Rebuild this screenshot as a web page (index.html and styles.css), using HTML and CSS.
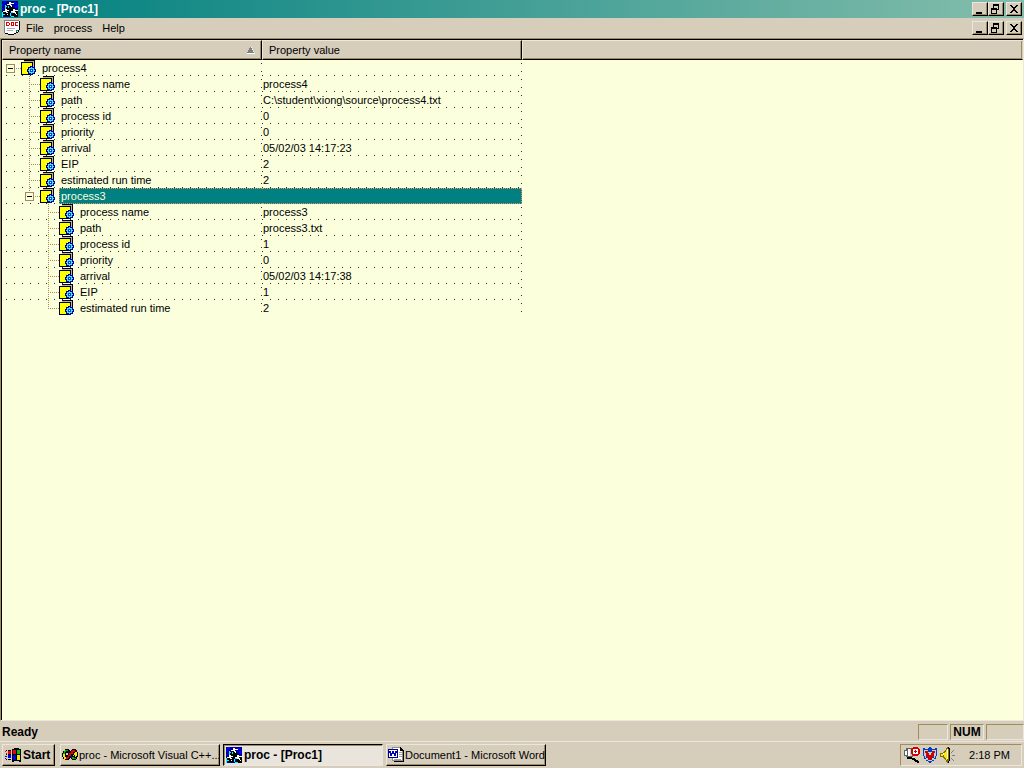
FILE: index.html
```html
<!DOCTYPE html>
<html lang="en">
<head>
<meta charset="utf-8">
<title>proc - [Proc1]</title>
<link rel="stylesheet" href="styles.css">
</head>
<body>
<svg class="defs" aria-hidden="true">
  <symbol id="mfc" viewBox="0 0 16 16">
    <path fill="#000090" d="M0 0h16v16H0z"/>
    <path fill="#0000ff" d="M1 0h3v2H1zM0 3h2v2H0zM11 1h4v2h-4zM13 4h3v3h-3zM0 7h2v1H0zM2 2h1v1H2z"/>
    <path fill="#000" d="M6 3h3v2h2v2h2v3h3v6h-6v-4H8v3H2v-2H0v-3h3V7h2V5h1z"/>
    <path fill="#fff" d="M7 1h2v1h3v1H9v1h1v2H9V5H8V4H5V3h2zM3 8h2v1h2v1H5v1h1v1H4v-1H1v-1h2zM11 8h2v1h3v1h-3v1h1v2h-1v-1h-2v-1H9v-1h2zM5 13h1v1H5zM14 13h1v1h-1z"/>
    <path fill="#00ffff" d="M3 4h1v4H3zM4 5h1v1H4zM6 5h1v2H6zM0 11h1v5H0zM1 13h2v1H1zM8 12h1v3H8zM9 11h2v1H9zM9 15h3v1H9z"/>
  </symbol>
  <symbol id="doc" viewBox="0 0 16 16">
    <path fill="#808080" d="M0 0h15v1H1v12H0z"/>
    <path fill="#fff" d="M1 1h14v9h-1v2h-2v1h-2v1H4v-1H1z"/>
    <path fill="#000" d="M15 1h1v9h-1zM14 10h1v2h-1zM12 12h2v1h-2zM1 13h3v1H1zM4 14h6v1H4zM10 13h2v1h-2z"/>
    <path fill="#e00000" fill-rule="evenodd" d="M2 2h3v1h1v2H5v1H2zm1 1v2h2V3zM7 2h3v4H7zm1 1v2h1V3zM11 2h3v1h-2v2h2v1h-3z"/>
    <path fill="#b0b0b0" d="M3 8h8v1H3zM3 10h6v1H3z"/>
    <path fill="#008080" d="M12 10h2v1h-1v1h-1z"/>
  </symbol>
  <symbol id="node" viewBox="0 0 16 16">
    <path fill="#000" d="M3 0h11v11H3z"/>
    <path fill="#b4b4b4" d="M3 1h9v1H3zM12 1h1v8h-1z"/>
    <path fill="#000" d="M0 2h12v13H0z"/>
    <path fill="#ff0" d="M1 3h10v11H1z"/>
    <path fill="#0000a0" d="M9 6h3v1h2v2h1v3h-1v2h-2v1H9v-1H7v-2H6V9h1V7h2z"/>
    <path fill="#40e8ff" d="M10 7h1v1h2v2h1v1h-1v2h-2v1h-1v-1H8v-2H7v-1h1V8h2z"/>
    <path fill="#0040d0" d="M9 9h3v3H9z"/>
    <path fill="#fff" d="M10 10h1v1h-1z"/>
  </symbol>
  <symbol id="win" viewBox="0 0 16 14">
    <path fill="#000" d="M7 1h2V0h5v1h2v13h-2v-1H9v1H7zM1 2h1v1H1zM3 2h3v1H3zM1 6h1v1H1zM3 6h3v1H3zM1 11h1v1H1zM3 11h3v1H3z"/>
    <path fill="#f00000" d="M8 2h3v4H8zM3 3h3v3H3zM0 3h1v1H0zM1 5h1v1H1z"/>
    <path fill="#00c000" d="M12 2h3v4h-3z"/>
    <path fill="#0000f0" d="M8 7h3v5H8zM3 7h3v3H3zM0 8h2v1H0zM0 10h1v1H0z"/>
    <path fill="#f0e800" d="M12 7h3v5h-3z"/>
  </symbol>
  <symbol id="vc" viewBox="0 0 16 12">
    <path fill="#000" d="M3 0h4v1h1v1h1V1h1V0h4v1h1v2h1v5h-1v2h-1v1h-4v-1H9V9H8v1H7v1H3v-1H1V8H0V4h1V2h2z"/>
    <path fill="#e00000" d="M9 2h1V1h3v2h-2v2H9v2H7v2H6v1H4V8h2V6h1V4h2z"/>
    <path fill="#00b000" d="M3 1h3v1H4v1H3v2H1V4h1V2h1zM10 8h2v1h2v1h-4z"/>
    <path fill="#ffe800" d="M1 5h2v3h1v2H2V8H1zM13 3h2v4h-1v1h-1V6h-1V4h1z"/>
    <path fill="#0000d0" d="M6 2h1v2H6zM9 7h1v2H9z"/>
    <path fill="#d6cdbb" d="M4 4h2v2H4zM11 6h1v1h-1z"/>
  </symbol>
  <symbol id="word" viewBox="0 0 16 16">
    <path fill="#909090" d="M4 0h8v1h2v2h1v11H4z"/>
    <path fill="#fff" d="M5 1h7v3h2v9H5z"/>
    <path fill="#000" d="M12 0h1v1h1v1h1v1h1v12H6v-1h9V4h-3z"/>
    <path fill="#a0a0a0" d="M11 5h3v1h-3zM11 7h3v1h-3zM11 9h3v1h-3zM6 12h7v1H6z"/>
    <path fill="#000090" d="M0 2h10v9H0z"/>
    <path fill="#fff" d="M1 3h8v7H1z"/>
    <path fill="#0000b0" d="M1 4h2v2h1V4h2v2h1V4h2v2H8v3H6V7H5 4v2H2V6H1z"/>
  </symbol>
  <symbol id="scan" viewBox="0 0 16 16">
    <path fill="#606060" d="M2 1h6v1h1v8H2V9H0V3h2z"/>
    <path fill="#fff" d="M1 4h2v4H1zM4 2h2v7H4z"/>
    <path fill="#c8c8c8" d="M6 2h2v7H6z"/>
    <path fill="#000" d="M3 10h5v1h3v1h1v1h2v1h1v2h-2v-1h-2v-1h-1v-1H8v-1H3z"/>
    <path fill="#d00000" d="M9 0h5v1h1v1h1v5h-1v1h-1v1H9V8H8V7H7V2h1V1h1z"/>
    <path fill="#fff" d="M9 2h5v5H9z"/>
    <path fill="#d00000" d="M11 3h1v1h1v1h-1v1h-1V5h-1V4h1z"/>
  </symbol>
  <symbol id="shield" viewBox="0 0 14 16">
    <path fill="#0040c0" d="M0 1h2v1h3V1h1V0h2v1h1v1h3V1h2v8h-1v3h-2v2H9v1H8v1H6v-1H5v-1H3v-2H1V9H0z"/>
    <path fill="#c0d0d8" d="M1 3h12v6h-1v2h-1v2H9v1H5v-1H3v-2H2V9H1z"/>
    <path fill="#0040c0" d="M5 3h4v2H5zM3 9h1v2H3zM10 9h1v2h-1z"/>
    <path fill="#d00000" d="M2 4h3v2h1v2h2V6h1V4h3v2h-1v3h-1v2H9v2H5v-2H4V9H3V6H2z"/>
  </symbol>
  <symbol id="speaker" viewBox="0 0 16 16">
    <path fill="#807000" d="M0 6h3V5h1V4h1V3h1V1h1V0h2v16H7v-1H6v-2H5v-1H4v-1H3v-1H0z"/>
    <path fill="#ffe800" d="M1 7h2v2H1zM4 6h1V5h1V3h1v10H6v-2H5v-1H4z"/>
    <path fill="#fff" d="M3 6h1v2H3zM7 2h1v10H7z"/>
    <path fill="#000" d="M8 0h1v1h1v13H9v2H8v-2h1V2H8z"/>
    <path fill="#808080" d="M11 5h1V4h1V3h1v1h-1v1h-1v1h-1zM12 8h3v1h-3zM11 11h1v1h1v1h1v1h-1v-1h-1v-1h-1z"/>
  </symbol>
  <symbol id="min" viewBox="0 0 12 10"><path d="M2 8h6v2H2z"/></symbol>
  <symbol id="restore" viewBox="0 0 12 10"><path d="M3 0h6v6H7V5h1V2H4v2H3zM1 4h6v6H1zm1 2v3h4V6z" fill-rule="evenodd"/></symbol>
  <symbol id="close" viewBox="0 0 12 10"><path d="M2 1h2v1h1v1h2V2h1V1h2v1H9v1H8v1H7v2h1v1h1v1h1v1H8V8H7V7H5v1H4v1H2V8h1V7h1V6h1V4H4V3H3V2H2z"/></symbol>
</svg>

<header class="titlebar">
  <svg class="icon"><use href="#mfc"/></svg>
  <h1 class="title">proc - [Proc1]</h1>
  <div class="controls">
    <button class="control" aria-label="Minimize"><svg class="glyph"><use href="#min"/></svg></button>
    <button class="control" aria-label="Restore"><svg class="glyph"><use href="#restore"/></svg></button>
    <button class="control control-close" aria-label="Close"><svg class="glyph"><use href="#close"/></svg></button>
  </div>
</header>

<nav class="menubar">
  <svg class="icon"><use href="#doc"/></svg>
  <button class="menu">File</button>
  <button class="menu">process</button>
  <button class="menu">Help</button>
  <div class="controls">
    <button class="control" aria-label="Minimize document"><svg class="glyph"><use href="#min"/></svg></button>
    <button class="control" aria-label="Restore document"><svg class="glyph"><use href="#restore"/></svg></button>
    <button class="control control-close" aria-label="Close document"><svg class="glyph"><use href="#close"/></svg></button>
  </div>
</nav>

<main class="view">
  <table class="tree">
    <colgroup><col class="col"><col class="col"><col></colgroup>
    <thead>
      <tr>
        <th><div class="head">Property name<svg class="sort" viewBox="0 0 8 7"><path fill="#fff" d="M4 0h1v2h1v2h1v2h1v1H0V6h6z"/><path fill="#808080" d="M3 0h1v1h1v2h1v2h1v1H0V5h1V3h1V1h1z"/></svg></div></th>
        <th><div class="head">Property value</div></th>
        <th><div class="head"></div></th>
      </tr>
    </thead>
    <tbody>
      <tr><td><div class="node"><span class="branch root"><button class="toggle" aria-label="Collapse process4"></button></span><svg class="icon"><use href="#node"/></svg><span class="label">process4</span></div></td><td></td><td></td></tr>
      <tr><td><div class="node"><span class="indent"></span><span class="branch"></span><svg class="icon"><use href="#node"/></svg><span class="label">process name</span></div></td><td>process4</td><td></td></tr>
      <tr><td><div class="node"><span class="indent"></span><span class="branch"></span><svg class="icon"><use href="#node"/></svg><span class="label">path</span></div></td><td>C:\student\xiong\source\process4.txt</td><td></td></tr>
      <tr><td><div class="node"><span class="indent"></span><span class="branch"></span><svg class="icon"><use href="#node"/></svg><span class="label">process id</span></div></td><td>0</td><td></td></tr>
      <tr><td><div class="node"><span class="indent"></span><span class="branch"></span><svg class="icon"><use href="#node"/></svg><span class="label">priority</span></div></td><td>0</td><td></td></tr>
      <tr><td><div class="node"><span class="indent"></span><span class="branch"></span><svg class="icon"><use href="#node"/></svg><span class="label">arrival</span></div></td><td>05/02/03 14:17:23</td><td></td></tr>
      <tr><td><div class="node"><span class="indent"></span><span class="branch"></span><svg class="icon"><use href="#node"/></svg><span class="label">EIP</span></div></td><td>2</td><td></td></tr>
      <tr><td><div class="node"><span class="indent"></span><span class="branch"></span><svg class="icon"><use href="#node"/></svg><span class="label">estimated run time</span></div></td><td>2</td><td></td></tr>
      <tr class="selected"><td><div class="node"><span class="indent"></span><span class="branch last"><button class="toggle" aria-label="Collapse process3"></button></span><svg class="icon"><use href="#node"/></svg><span class="label">process3</span></div></td><td></td><td></td></tr>
      <tr><td><div class="node"><span class="indent"></span><span class="indent"></span><span class="branch"></span><svg class="icon"><use href="#node"/></svg><span class="label">process name</span></div></td><td>process3</td><td></td></tr>
      <tr><td><div class="node"><span class="indent"></span><span class="indent"></span><span class="branch"></span><svg class="icon"><use href="#node"/></svg><span class="label">path</span></div></td><td>process3.txt</td><td></td></tr>
      <tr><td><div class="node"><span class="indent"></span><span class="indent"></span><span class="branch"></span><svg class="icon"><use href="#node"/></svg><span class="label">process id</span></div></td><td>1</td><td></td></tr>
      <tr><td><div class="node"><span class="indent"></span><span class="indent"></span><span class="branch"></span><svg class="icon"><use href="#node"/></svg><span class="label">priority</span></div></td><td>0</td><td></td></tr>
      <tr><td><div class="node"><span class="indent"></span><span class="indent"></span><span class="branch"></span><svg class="icon"><use href="#node"/></svg><span class="label">arrival</span></div></td><td>05/02/03 14:17:38</td><td></td></tr>
      <tr><td><div class="node"><span class="indent"></span><span class="indent"></span><span class="branch"></span><svg class="icon"><use href="#node"/></svg><span class="label">EIP</span></div></td><td>1</td><td></td></tr>
      <tr><td><div class="node"><span class="indent"></span><span class="indent"></span><span class="branch last"></span><svg class="icon"><use href="#node"/></svg><span class="label">estimated run time</span></div></td><td>2</td><td></td></tr>
    </tbody>
  </table>
</main>

<div class="statusbar">
  <span class="status">Ready</span>
  <span class="pane"></span>
  <span class="pane pane-num">NUM</span>
  <span class="pane pane-last"></span>
</div>

<footer class="taskbar">
  <button class="task start"><svg class="icon"><use href="#win"/></svg>Start</button>
  <button class="task"><svg class="icon"><use href="#vc"/></svg>proc - Microsoft Visual C++...</button>
  <button class="task active"><svg class="icon"><use href="#mfc"/></svg>proc - [Proc1]</button>
  <button class="task"><svg class="icon"><use href="#word"/></svg>Document1 - Microsoft Word</button>
  <div class="tray">
    <svg class="icon"><use href="#scan"/></svg>
    <svg class="icon"><use href="#shield"/></svg>
    <svg class="icon"><use href="#speaker"/></svg>
    <time class="clock">2:18 PM</time>
  </div>
</footer>
</body>
</html>
```
FILE: styles.css
```css
:root {
  --face: #d6cdbb;
  --light: #ebe6de;
  --shadow: #a08c5c;
  --paper: #fbffdc;
  --teal: #008080;
  --grid: #203040;
  --guide: #a08c5c;
  --strong: bold 12px/16px "Liberation Sans", Arial, sans-serif;
}

* { box-sizing: border-box; }

body {
  margin: 0;
  height: 100vh;
  display: flex;
  flex-direction: column;
  overflow: hidden;
  background: var(--face);
  color: #000;
  font: 11px/16px "Liberation Sans", Arial, sans-serif;
}

button {
  margin: 0;
  padding: 0;
  border: 0;
  background: none;
  color: inherit;
  font: inherit;
}

.defs { position: absolute; width: 0; height: 0; }

svg { shape-rendering: crispEdges; }

.icon { flex: none; width: 16px; height: 16px; }

.titlebar {
  display: flex;
  align-items: center;
  gap: 2px;
  height: 18px;
  padding: 0 2px;
  background: linear-gradient(90deg, #008080, #84bdab);
  color: #fff;
}

.title { margin: 0; font: var(--strong); }

.controls { display: flex; margin-left: auto; }

.control {
  display: flex;
  width: 16px;
  height: 14px;
  padding: 1px;
  border: 1px solid;
  border-color: var(--light) #000 #000 var(--light);
  background: var(--face);
  box-shadow: inset -1px -1px var(--shadow);
}

.control-close { margin-left: 2px; }

.glyph { width: 12px; height: 10px; }

.menubar {
  display: flex;
  align-items: center;
  height: 20px;
  padding: 0 2px;
}

.menu { padding: 0 5px; }

.menubar .icon { margin: 0 1px 0 2px; }

.view {
  flex: 1;
  min-height: 0;
  border-style: solid;
  border-width: 1px;
  border-color: var(--shadow) var(--light) var(--light) var(--shadow);
  background: var(--paper);
  box-shadow: inset 1px 1px #000;
  padding: 1px 0 0 1px;
}

.tree {
  width: 100%;
  table-layout: fixed;
  border-collapse: separate;
  border-spacing: 0;
}

.col { width: 260px; }

.tree th, .tree td { padding: 0; text-align: left; font-weight: normal; }

.head {
  display: flex;
  align-items: center;
  justify-content: space-between;
  height: 20px;
  padding: 0 6px;
  border: 1px solid;
  border-color: var(--light) #000 #000 var(--light);
  background: var(--face);
  box-shadow: inset -1px -1px var(--shadow);
}

.tree th:last-child .head { border-right-color: var(--face); }

.sort { width: 8px; height: 7px; }

.tree td { height: 16px; line-height: 16px; white-space: nowrap; }

.tree td:not(:last-child) {
  background:
    linear-gradient(var(--grid) 1px, transparent 1px) 100% 3px / 1px 8px repeat-y,
    linear-gradient(90deg, var(--grid) 1px, transparent 1px) 4px 100% / 8px 1px repeat-x;
}

.tree td:nth-child(2) { background-position: 100% 3px, 0 100%; }

.tree tbody tr:last-child td:not(:last-child) {
  background: linear-gradient(var(--grid) 1px, transparent 1px) 100% 3px / 1px 8px repeat-y;
}

.node { display: flex; height: 16px; }

.indent, .branch { flex: none; width: 19px; }

.branch {
  padding: 4px;
  background:
    repeating-linear-gradient(var(--guide) 0 1px, transparent 1px 2px) 8px 0 / 1px 16px no-repeat,
    repeating-linear-gradient(90deg, var(--guide) 0 1px, transparent 1px 2px) 8px 8px / 11px 1px no-repeat;
}

.branch.last { background-size: 1px 8px, 11px 1px; }
.branch.root { background-size: 1px 0, 11px 1px; }

.toggle {
  display: block;
  width: 9px;
  height: 9px;
  border: 1px solid var(--guide);
  background: linear-gradient(#000, #000) 1px 3px / 5px 1px no-repeat var(--paper);
}

.label { flex: 1; padding-left: 5px; }

.selected .label, .selected td:nth-child(2) { background: var(--teal); color: var(--paper); }

.selected .label {
  margin-left: 3px;
  padding-left: 1px;
  border: 1px dotted #f09060;
  border-right: 0;
  line-height: 14px;
}

.tree .selected td:nth-child(2) {
  background: var(--teal);
  border: 1px dotted #f09060;
  border-left: 0;
}

.tree td:nth-child(2) { padding-left: 1px; }

.statusbar {
  display: flex;
  align-items: center;
  gap: 2px;
  height: 20px;
  padding: 2px 0 0 2px;
  font: var(--strong);
}

.status { flex: 1; }

.pane {
  width: 30px;
  height: 16px;
  border: 1px solid;
  border-color: var(--shadow) var(--light) var(--light) var(--shadow);
  line-height: 14px;
}

.pane-num { width: 34px; text-align: center; }
.pane-last { width: 38px; }

.taskbar {
  display: flex;
  gap: 3px;
  height: 27px;
  padding: 2px;
  border-top: 1px solid var(--light);
}

.task {
  display: flex;
  align-items: center;
  gap: 1px;
  width: 160px;
  padding: 0 1px;
  border: 1px solid;
  border-color: var(--light) #000 #000 var(--light);
  box-shadow: inset -1px -1px var(--shadow);
  white-space: nowrap;
}

.start { width: 53px; gap: 2px; padding: 0 2px; margin-right: 2px; font: var(--strong); }

.active {
  gap: 2px;
  padding: 0 2px;
  border-color: #000 var(--light) var(--light) #000;
  background: #e9e4dc;
  box-shadow: inset 1px 1px var(--shadow);
  font: var(--strong);
}

.tray {
  display: flex;
  align-items: center;
  gap: 2px;
  margin-left: auto;
  width: 122px;
  padding: 0 3px;
  border: 1px solid;
  border-color: var(--shadow) var(--light) var(--light) var(--shadow);
}

.clock { margin-left: auto; padding-right: 8px; }
```
